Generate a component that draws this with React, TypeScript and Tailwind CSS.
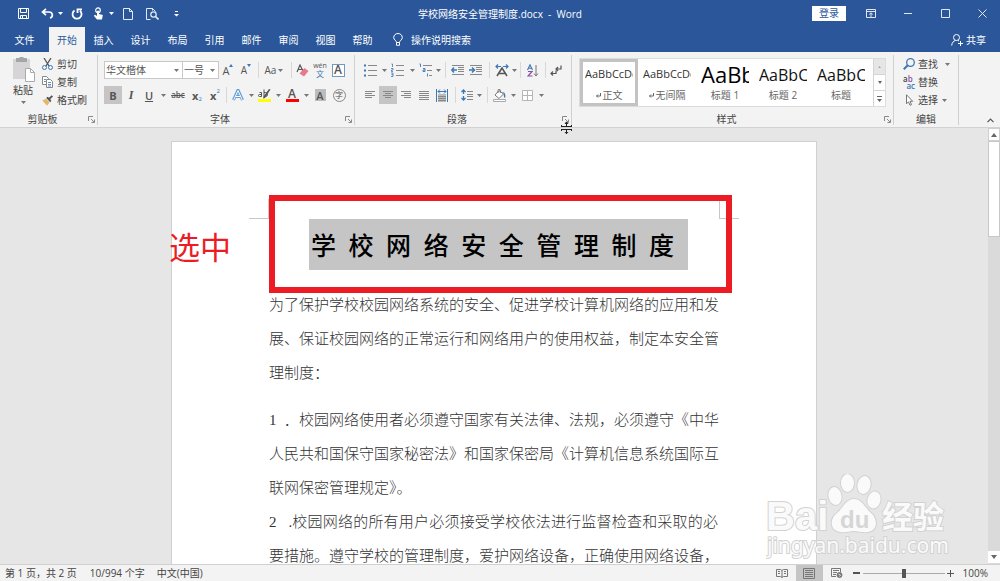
import type { ReactNode } from "react";

const blue = "#3b78b5";
const ink = "#555555";

function Caret({ className = "w-2", light = false }: { className?: string; light?: boolean }) {
  return (
    <span className={`flex shrink-0 items-center justify-center ${className}`}>
      <svg width="5" height="3" viewBox="0 0 5 3">
        <path d="M0 0h5L2.5 3z" fill={light ? "#fff" : "#777"} />
      </svg>
    </span>
  );
}

function Tool({
  label,
  w = "w-[18px]",
  on = false,
  children,
}: {
  label: string;
  w?: string;
  on?: boolean;
  children: ReactNode;
}) {
  return (
    <button
      type="button"
      aria-label={label}
      className={`flex h-[18px] shrink-0 items-center justify-center leading-none ${w} ${on ? "bg-[#c5c5c5]" : ""}`}
    >
      {children}
    </button>
  );
}

function Sep({ w = "w-2" }: { w?: string }) {
  return (
    <span className={`flex h-4 shrink-0 justify-center ${w}`}>
      <span className="w-px bg-[#d8d8d8]" />
    </span>
  );
}

function Launcher() {
  return (
    <button type="button" aria-label="更多选项" className="flex h-3 w-3 items-center justify-center">
      <svg width="7" height="7" viewBox="0 0 7 7" fill="none" stroke="#888">
        <path d="M.5 5V.5H5M3 3l3 3M6.500 3.500v3h-3" />
      </svg>
    </button>
  );
}

function Group({
  title,
  width,
  launcher = true,
  children,
}: {
  title: string;
  width: string;
  launcher?: boolean;
  children: ReactNode;
}) {
  return (
    <section className={`flex shrink-0 flex-col border-r border-[#d0d0d0] ${width}`}>
      <div className="flex-1">{children}</div>
      <div className="flex h-3 items-center">
        <h2 className="flex-1 text-center text-[10px] leading-3 text-[#444]">{title}</h2>
        {launcher && <Launcher />}
      </div>
    </section>
  );
}

function Lines({ rows }: { rows: [number, number][] }) {
  return (
    <svg width="12" height="12" viewBox="0 0 12 12" stroke="#888">
      {rows.map(([a, b], i) => (
        <path key={i} d={`M${a} ${i * 2 + 2.5}H${b}`} />
      ))}
    </svg>
  );
}

function ListIcon({ kind }: { kind: "dot" | "num" | "multi" }) {
  return (
    <svg width="14" height="14" viewBox="0 0 14 14">
      {kind === "dot" && (
        <>
          <path d="M5 2.500h9M5 7.500h9M5 12.500h9" stroke="#888" />
          <path d="M1 1.500h2v2H1zM1 6.500h2v2H1zM1 11.500h2v2H1z" fill={blue} />
        </>
      )}
      {kind === "num" && (
        <>
          <path d="M5 2.500h8M5 7.500h8M5 12.500h8" stroke="#888" />
          <path d="M.5 1h1v3M0 5.500h2v1.500H.5V8.500H2M0 10h2v3.500H0M.5 11.700H2" fill="none" stroke={blue} strokeWidth=".8" />
        </>
      )}
      {kind === "multi" && (
        <>
          <path d="M4 2.500h9M8 7.500h5M10 12.500h3" stroke="#888" />
          <path d="M.5 1h1v3M4 5.500h2v3H4V7h2M8.500 10.500v3" fill="none" stroke={blue} strokeWidth=".9" />
        </>
      )}
    </svg>
  );
}

function IndentIcon({ inward }: { inward: boolean }) {
  return (
    <svg width="14" height="12" viewBox="0 0 14 12" fill="none">
      <path d="M1 1.500h12M7 3.500h6M7 5.500h6M7 7.500h6M1 10.500h12" stroke="#888" />
      <path
        d={inward ? "M0 6h5M3 3.500L5.500 6 3 8.500" : "M6 6H1M3 3.500L.7 6 3 8.500"}
        stroke={blue}
        strokeWidth="1.500"
      />
    </svg>
  );
}

function TitleBar() {
  return (
    <header className="flex h-[27px] shrink-0 items-center justify-between text-white">
      <div className="flex flex-1 items-center">
        <span className="w-[14px]" />
        <Tool label="保存">
          <svg width="11" height="11" viewBox="0 0 11 11" fill="none" stroke="#fff">
            <path d="M.5.5h10v10H.5zM2.500.5v4h6v-4M2.500 10.500v-3h6v3M4.500 8v2" />
          </svg>
        </Tool>
        <span className="w-[6px]" />
        <Tool label="撤消">
          <svg width="13" height="11" viewBox="0 0 13 11" fill="none" stroke="#fff" strokeWidth="1.700">
            <path d="M5 .8L1.500 4 5 7.200M1.500 4H8c4 0 4.500 5 1 6" />
          </svg>
        </Tool>
        <Caret light />
        <Tool label="重复" w="w-[26px]">
          <svg width="12" height="12" viewBox="0 0 12 12" fill="none" stroke="#fff" strokeWidth="1.800">
            <path d="M3.500 2.500A4.500 4.500 0 1 0 9 2.800M6.500 5V1.300H11" />
          </svg>
        </Tool>
        <Tool label="触摸/鼠标模式" w="w-[16px]">
          <svg width="11" height="13" viewBox="0 0 11 13">
            <path d="M4 4.500V9L2 7.800.8 8.800 4 12.500h5l.8-4.500L6 7V4.500a1 1 0 0 0-2 0z" fill="#fff" />
            <circle cx="5" cy="3.200" r="2.300" fill="none" stroke="#fff" strokeWidth="1.200" />
          </svg>
        </Tool>
        <Caret light className="w-[10px]" />
        <Tool label="新建" w="w-6">
          <svg width="10" height="12" viewBox="0 0 10 12" fill="none" stroke="#e6ecf5">
            <path d="M.5.5h6l3 3v8h-9zM6.500.5v3h3" />
          </svg>
        </Tool>
        <Tool label="打印预览" w="w-6">
          <svg width="13" height="12" viewBox="0 0 13 12" fill="none" stroke="#e6ecf5">
            <path d="M4.500 11.500h-4V.5h6l3 3M6.500.5v2" />
            <circle cx="7.500" cy="6.500" r="2.700" strokeWidth="1.200" />
            <path d="M9.500 8.500l3 3" strokeWidth="1.600" />
          </svg>
        </Tool>
        <Tool label="自定义快速访问工具栏" w="w-6">
          <svg width="5" height="6" viewBox="0 0 5 6" fill="#fff">
            <path d="M1 0h3v1H1zM0 3h5L2.500 5.500z" />
          </svg>
        </Tool>
      </div>
      <h1 className="text-center text-[10px] leading-4">学校网络安全管理制度.docx&nbsp; -&nbsp; Word</h1>
      <div className="flex flex-1 items-center justify-end">
        <button type="button" className="h-[15px] w-[34px] bg-white text-[10px] leading-[15px] text-[#2b579a]">
          登录
        </button>
        <Tool label="功能区显示选项" w="w-[50px]">
          <svg width="10" height="9" viewBox="0 0 10 9" fill="none" stroke="#dfe7f3">
            <path d="M.5.5h9v8h-9zM1 2.500h8M5 8V4M3.200 5.500L5 3.800l1.800 1.700" />
          </svg>
        </Tool>
        <Tool label="最小化" w="w-[24px]">
          <svg width="8" height="1" viewBox="0 0 8 1">
            <path d="M0 0h8v1H0z" fill="#dfe7f3" />
          </svg>
        </Tool>
        <Tool label="最大化" w="w-[50px]">
          <svg width="9" height="9" viewBox="0 0 9 9" fill="none" stroke="#dfe7f3">
            <path d="M.5.5h8v8h-8z" />
          </svg>
        </Tool>
        <Tool label="关闭" w="w-[24px]">
          <svg width="9" height="9" viewBox="0 0 9 9" stroke="#dfe7f3">
            <path d="M.5.5l8 8M8.500.5l-8 8" />
          </svg>
        </Tool>
        <span className="w-[6px]" />
      </div>
    </header>
  );
}

const tabs = ["插入", "设计", "布局", "引用", "邮件", "审阅", "视图", "帮助"];

function TabBar() {
  return (
    <nav className="flex h-[25px] shrink-0 items-stretch text-[10px] leading-4 text-white">
      <button type="button" className="w-[49px]">文件</button>
      <button type="button" className="w-[36px] bg-[#f3f3f3] text-[#2b579a]">开始</button>
      {tabs.map((t) => (
        <button key={t} type="button" className="w-[37px]">{t}</button>
      ))}
      <button type="button" className="ml-3 flex items-center gap-2">
        <svg width="10" height="13" viewBox="0 0 10 13" fill="none" stroke="#fff">
          <path d="M3.500 9.500C3.500 7.500.7 7 .7 4.500a4.300 4 0 0 1 8.600 0c0 2.500-2.800 3-2.800 5zM3.500 9.500v2.800h3V9.500" />
        </svg>
        操作说明搜索
      </button>
      <button type="button" className="mr-[14px] ml-auto flex items-center gap-[3px]">
        <svg width="12" height="12" viewBox="0 0 12 12" fill="none" stroke="#fff">
          <circle cx="5.500" cy="3.500" r="3" />
          <path d="M.7 11.500C1 8.500 2.500 7 4.500 6.500M7 6.500l1 .5M9.500 7v5M7 9.500h5" />
        </svg>
        共享
      </button>
    </nav>
  );
}

function Clipboard() {
  return (
    <Group title="剪贴板" width="w-[98px]">
      <div className="flex pl-[10px] text-[10px] text-[#444]">
        <button type="button" className="flex w-[26px] flex-col items-center pt-[2px]">
          <svg width="23" height="25" viewBox="0 0 23 25">
            <path d="M1 2h17v20H1z" fill="#d6d4d6" />
            <path d="M4 1h3.500a2 2 0 0 1 4 0H15v4H4z" fill="#a5a5a5" />
            <path d="M13.500 11.500h5l4 4v9h-9z" fill="#fff" stroke="#aaa" />
            <path d="M18.500 11.500v4h4" fill="none" stroke="#aaa" />
          </svg>
          <span className="leading-4 whitespace-nowrap">粘贴</span>
          <Caret className="h-2" />
        </button>
        <div className="flex flex-col pl-[6px]">
          <button type="button" className="flex h-[18px] items-center gap-1">
            <svg width="11" height="12" viewBox="0 0 11 12" fill="none">
              <path d="M2 0l5 8M9 0L4 8" stroke={ink} strokeWidth="1.300" />
              <circle cx="2.500" cy="9.500" r="2" stroke={blue} />
              <circle cx="8.500" cy="9.500" r="2" stroke={blue} />
            </svg>
            剪切
          </button>
          <button type="button" className="flex h-[18px] items-center gap-1">
            <svg width="11" height="12" viewBox="0 0 11 12" fill="#fff" stroke="#888">
              <path d="M.5.5h4l2 2v6h-6z" />
              <path d="M4.500 3.500h4l2 2v6h-6z" />
              <path d="M2 3.500h2M2 5.500h2M6 6.500h3M6 8.500h3M6 10h3" stroke={blue} strokeWidth=".8" />
            </svg>
            复制
          </button>
          <button type="button" className="flex h-[18px] items-center gap-1">
            <svg width="11" height="11" viewBox="0 0 11 11">
              <path d="M.3 5.500L4 3.800l3.500 3.700L5 10.700z" fill="#e8b567" />
              <path d="M4.200 3l4 4.200 1.200-1.500-1.200-1.500L11 1.500 9.700.2 7 2.800 5.500 1.700z" fill={ink} />
            </svg>
            格式刷
          </button>
        </div>
      </div>
    </Group>
  );
}

function FontGroup() {
  return (
    <Group title="字体" width="w-[257px]">
      <div className="flex flex-col gap-[7px] pt-[6px] pl-[6px] text-[#555]">
        <div className="flex items-center">
          <div className="flex h-[18px] w-[79px] items-center border border-[#c8c8c8] bg-white">
            <select aria-label="字体" className="h-4 min-w-0 flex-1 appearance-none bg-transparent pl-px text-[10px] leading-4 outline-none">
              <option>华文楷体</option>
            </select>
            <Caret className="w-3" />
          </div>
          <div className="-ml-px flex h-[18px] w-[37px] items-center border border-[#c8c8c8] bg-white">
            <select aria-label="字号" className="h-4 min-w-0 flex-1 appearance-none bg-transparent pl-px text-[10px] leading-4 outline-none">
              <option>一号</option>
            </select>
            <Caret className="w-3" />
          </div>
          <Tool label="增大字号">
            <span className="text-[11px]">A</span>
            <svg width="4" height="12" viewBox="0 0 4 12"><path d="M0 3h4L2 0z" fill={blue} /></svg>
          </Tool>
          <Tool label="减小字号">
            <span className="text-[10px]">A</span>
            <svg width="4" height="12" viewBox="0 0 4 12"><path d="M0 0h4L2 3z" fill={blue} /></svg>
          </Tool>
          <Sep w="w-[6px]" />
          <Tool label="更改大小写" w="w-[28px]">
            <span className="text-[10px]">Aa</span>
            <Caret className="w-[9px]" />
          </Tool>
          <Sep w="w-1" />
          <Tool label="清除所有格式">
            <svg width="13" height="13" viewBox="0 0 13 13">
              <path d="M1 8L4 1l3 6M2 5.500h4" fill="none" stroke={ink} strokeWidth="1.200" />
              <path d="M8.500 4l4 3-4.500 5.500-4.500-3z" fill="#e8798c" />
            </svg>
          </Tool>
          <Tool label="拼音指南">
            <span className="flex flex-col items-center">
              <span className="text-[7px] leading-[6px]">wén</span>
              <span className="text-[8px] leading-[9px] text-[#3b78b5]">文</span>
            </span>
          </Tool>
          <Tool label="字符边框">
            <span className="flex h-[13px] w-[13px] items-center justify-center border border-[#6f9bc0] bg-white text-[12px] font-semibold">A</span>
          </Tool>
        </div>
        <div className="flex items-center">
          <Tool label="加粗" on><b className="text-[11px]">B</b></Tool>
          <Tool label="倾斜"><i className="font-['Liberation_Serif',serif] text-[12px] font-bold">I</i></Tool>
          <Tool label="下划线"><span className="text-[11px] font-semibold underline">U</span></Tool>
          <Caret className="w-[10px]" />
          <Tool label="删除线" w="w-5"><span className="text-[8px] font-semibold line-through">abc</span></Tool>
          <Tool label="下标">
            <b className="text-[11px]">x</b><span className="self-end pb-[2px] text-[6px] text-[#3b78b5]">2</span>
          </Tool>
          <Tool label="上标">
            <b className="text-[11px]">x</b><span className="self-start pt-[2px] text-[6px] text-[#3b78b5]">2</span>
          </Tool>
          <Sep w="w-1" />
          <Tool label="文本效果" w="w-5">
            <svg width="12" height="12" viewBox="0 0 12 12" fill="none">
              <path d="M1.500 11L6 1l4.500 10M3.500 7.500h5" stroke="#5e9bd5" strokeWidth="3" strokeLinejoin="round" />
              <path d="M1.800 10.800L6 1.500l4.200 9.300M3.500 7.500h5" stroke="#fff" strokeWidth="1" />
            </svg>
          </Tool>
          <Caret className="w-[6px]" />
          <Tool label="突出显示颜色" w="w-5">
            <span className="flex flex-col items-center">
              <svg width="14" height="10" viewBox="0 0 14 10">
                <path d="M2.500 3.500h2v4h-2a1 1 0 0 1 0-2h2M7 .5v7h1.500a1.500 1.500 0 0 0 0-4H7" fill="none" stroke={ink} />
                <path d="M13.500.5L8 9l-2 .5.5-2L12 0z" fill={ink} />
              </svg>
              <span className="h-[3px] w-[13px] bg-[#ffff00]" />
            </span>
          </Tool>
          <Caret />
          <Tool label="字体颜色" w="w-5">
            <span className="flex flex-col items-center">
              <span className="text-[12px] leading-[10px] font-semibold">A</span>
              <span className="h-[3px] w-[13px] bg-[#ff0000]" />
            </span>
          </Tool>
          <Caret />
          <Tool label="字符底纹" w="w-5">
            <span className="flex h-[12px] w-[11px] items-center justify-center bg-[#bdbdbd] text-[11px] font-semibold">A</span>
          </Tool>
          <Tool label="带圈字符">
            <span className="flex h-[13px] w-[13px] items-center justify-center rounded-full border border-[#888] text-[8px]">字</span>
          </Tool>
        </div>
      </div>
    </Group>
  );
}

function ParagraphGroup() {
  return (
    <Group title="段落" width="w-[217px]">
      <div className="flex flex-col gap-[7px] pt-[6px] pl-[6px]">
        <div className="flex items-center">
          <Tool label="项目符号"><ListIcon kind="dot" /></Tool>
          <Caret className="w-[10px]" />
          <Tool label="编号"><ListIcon kind="num" /></Tool>
          <Caret className="w-[10px]" />
          <Tool label="多级列表"><ListIcon kind="multi" /></Tool>
          <Caret className="w-[6px]" />
          <Sep />
          <Tool label="减少缩进量"><IndentIcon inward={false} /></Tool>
          <Tool label="增加缩进量"><IndentIcon inward /></Tool>
          <Sep />
          <Tool label="中文版式">
            <svg width="14" height="13" viewBox="0 0 14 13" fill="none">
              <path d="M2 12l5-8 5 8M4 9.500h6" stroke={ink} strokeWidth="1.500" />
              <path d="M6 2.500H1M3 .5l-2 2 2 2M8 2.500h5M11 .5l2 2-2 2" stroke={blue} strokeWidth="1.200" />
            </svg>
          </Tool>
          <Caret className="w-[6px]" />
          <Sep w="w-[6px]" />
          <Tool label="排序" w="w-5">
            <svg width="12" height="13" viewBox="0 0 12 13" fill="none">
              <path d="M.5 6L3 .8 5.500 6M1.500 4.200h3" stroke={blue} strokeWidth="1.100" />
              <path d="M1 7.500h4L1 12h4.500" stroke="#8a4fa8" strokeWidth="1.200" />
              <path d="M9 1v11M7 9.500L9 12l2-2.500" stroke="#777" />
            </svg>
          </Tool>
          <Sep w="w-1" />
          <Tool label="显示编辑标记">
            <svg width="12" height="11" viewBox="0 0 12 11" fill="none" stroke={ink} strokeWidth="1.200">
              <path d="M11 .5V4H6M8 2L6 4l2 2M6 5.500V8.500H1M3 6.500l-2 2 2 2" />
            </svg>
          </Tool>
        </div>
        <div className="flex items-center">
          <Tool label="左对齐"><Lines rows={[[1, 11], [1, 8], [1, 11], [1, 8]]} /></Tool>
          <Tool label="居中" on><Lines rows={[[1, 11], [3, 9], [1, 11], [3, 9]]} /></Tool>
          <Tool label="右对齐"><Lines rows={[[1, 11], [4, 11], [1, 11], [4, 11]]} /></Tool>
          <Tool label="两端对齐"><Lines rows={[[1, 11], [1, 11], [1, 11], [1, 11], [1, 11]]} /></Tool>
          <Tool label="分散对齐">
            <svg width="12" height="13" viewBox="0 0 12 13" fill="none">
              <path d="M2 5h8v8H2z" fill="#bbb" />
              <path d="M2 7.500h8M2 9.500h8M2 11.500h8" stroke="#888" />
              <path d="M.5 0v13M11.500 0v13M2 2.500h8M4 .5l-2 2 2 2M8 .5l2 2-2 2" stroke={blue} />
            </svg>
          </Tool>
          <Sep />
          <Tool label="行距" w="w-4">
            <svg width="12" height="12" viewBox="0 0 12 12" fill="none">
              <path d="M6 2.500h6M6 5.500h6M6 7.500h6M6 10.500h6" stroke="#888" />
              <path d="M2.500 1v4M2.500 7v4M.5 3l2-2 2 2M.5 9l2 2 2-2" stroke={blue} strokeWidth="1.300" />
            </svg>
          </Tool>
          <Caret />
          <Sep />
          <Tool label="底纹">
            <svg width="14" height="13" viewBox="0 0 14 13" fill="none">
              <path d="M6 1.500L2 6l4 3.500L10.500 5zM5 4V1.500a1.200 1.200 0 0 1 2.400 0V4" fill="#fff" stroke="#777" />
              <path d="M9 3c3 0 4 3 3 6-1-.5-1.500-2-1-4z" fill={blue} />
              <path d="M.5 10.500h12v2H.5z" fill="#fff" stroke="#aaa" />
            </svg>
          </Tool>
          <Caret />
          <Tool label="边框" w="w-5">
            <svg width="11" height="11" viewBox="0 0 11 11" fill="#fff" stroke="#b5b5b5">
              <path d="M.5.5h10v10H.5zM5.500.5v10M.5 5.500h10" />
            </svg>
          </Tool>
          <Caret />
        </div>
      </div>
    </Group>
  );
}

const styles = [
  { name: "正文", mark: true, sample: "AaBbCcDc", size: "text-[11px] text-[#333]", on: true },
  { name: "无间隔", mark: true, sample: "AaBbCcDc", size: "text-[11px] text-[#333]", on: false },
  { name: "标题 1", mark: false, sample: "AaBb", size: "text-[22px] font-medium text-black", on: false },
  { name: "标题 2", mark: false, sample: "AaBbC", size: "text-[16px] text-[#111]", on: false },
  { name: "标题", mark: false, sample: "AaBbC", size: "text-[16px] text-[#111]", on: false },
];

function StylesGroup() {
  return (
    <Group title="样式" width="w-[322px]">
      <div className="pt-[3px] pl-[7px]">
        <div className="flex h-[49px] w-[307px] border border-[#dcdcdc] bg-white">
          {styles.map((s) => (
            <button
              key={s.name}
              type="button"
              className={`flex w-[58px] shrink-0 flex-col items-stretch border-[3px] px-[2px] ${s.on ? "border-[#c3c3c3]" : "border-transparent"}`}
            >
              <span className={`flex h-[26px] items-center overflow-hidden whitespace-nowrap ${s.size}`}>{s.sample}</span>
              <span className="flex h-4 items-center justify-center gap-[2px] text-[10px] leading-none whitespace-nowrap text-[#666]">
                {s.mark && (
                  <svg width="5" height="5" viewBox="0 0 5 5" fill="none" stroke="#666">
                    <path d="M4.500 0v3H.5M2 1.500L.5 3 2 4.500" />
                  </svg>
                )}
                {s.name}
              </span>
            </button>
          ))}
          <div className="ml-auto flex w-3 flex-col border-l border-[#d4d4d4]">
            <button type="button" aria-label="上一行" className="flex flex-1 items-center justify-center bg-[#e6e6e6]">
              <svg width="3" height="2" viewBox="0 0 3 2"><path d="M0 2h3L1.500 0z" fill="#aaa" /></svg>
            </button>
            <button type="button" aria-label="下一行" className="flex flex-1 items-center justify-center border-y border-[#d4d4d4]">
              <svg width="4" height="3" viewBox="0 0 4 3"><path d="M0 0h4L2 3z" fill="#666" /></svg>
            </button>
            <button type="button" aria-label="其他样式" className="flex flex-1 items-center justify-center">
              <svg width="5" height="6" viewBox="0 0 5 6" fill="#666"><path d="M0 0h5v1H0zM0 3h5L2.500 6z" /></svg>
            </button>
          </div>
        </div>
      </div>
    </Group>
  );
}

function EditGroup() {
  return (
    <Group title="编辑" width="w-[65px]" launcher={false}>
      <div className="flex flex-col pl-[9px] text-[10px] text-[#444]">
        <button type="button" className="flex h-[18px] items-center gap-[3px]">
          <svg width="12" height="12" viewBox="0 0 12 12" fill="none" stroke={blue}>
            <circle cx="7.500" cy="4.500" r="3.800" strokeWidth="1.300" />
            <path d="M4.800 7.200L.8 11.200" strokeWidth="2" />
          </svg>
          查找
          <Caret className="w-[12px]" />
        </button>
        <button type="button" className="flex h-[18px] items-center gap-[3px]">
          <span className="flex w-3 flex-col text-[8px] leading-[7px] font-semibold">
            <span className="text-left">a<span className="text-[#8a4fa8]">b</span></span>
            <span className="text-right text-[#3b78b5]">ac</span>
          </span>
          替换
        </button>
        <button type="button" className="flex h-[18px] items-center gap-[3px]">
          <svg width="12" height="12" viewBox="0 0 12 12" fill="#fff" stroke="#777">
            <path d="M3.500.8v9l2-2 1.500 3.500 1.500-.7L7 7.300h2.700z" />
          </svg>
          选择
          <Caret className="w-[6px]" />
        </button>
      </div>
    </Group>
  );
}

function CropMark({ side }: { side: "left" | "right" }) {
  return (
    <span
      className={`absolute top-[57px] h-[20px] w-[20px] border-b border-[#c8c8c8] ${side === "left" ? "left-[77px] border-r" : "left-[547px] border-l"}`}
    />
  );
}

const paragraphs = [
  {
    lines: ["为了保护学校校园网络系统的安全、促进学校计算机网络的应用和发", "展、保证校园网络的正常运行和网络用户的使用权益，制定本安全管"],
    last: "理制度：",
  },
  {
    lines: ["1\u00a0 ．校园网络使用者必须遵守国家有关法律、法规，必须遵守《中华", "人民共和国保守国家秘密法》和国家保密局《计算机信息系统国际互"],
    last: "联网保密管理规定》。",
  },
  {
    lines: ["2\u00a0\u00a0 .校园网络的所有用户必须接受学校依法进行监督检查和采取的必", "要措施。遵守学校的管理制度，爱护网络设备，正确使用网络设备，"],
    last: "",
  },
];

function Watermark() {
  return (
    <svg
      width="184"
      height="90"
      viewBox="0 0 184 90"
      className="pointer-events-none absolute right-[38px] bottom-0"
      fill="#fafafa"
      stroke="#d2d2d2"
      strokeWidth="2"
      paintOrder="stroke"
    >
      <text x="0" y="56" fontSize="40" fontWeight="700" fontFamily="Liberation Sans, sans-serif">Bai</text>
      <ellipse cx="69" cy="22" rx="6.500" ry="9" transform="rotate(-12 69 22)" />
      <ellipse cx="81.500" cy="9" rx="6.500" ry="9" />
      <ellipse cx="98" cy="11" rx="6.500" ry="9" transform="rotate(12 98 11)" />
      <ellipse cx="108" cy="26" rx="6.500" ry="8.500" transform="rotate(14 108 26)" />
      <path d="M88 25c8 0 11 9 17 14 6 5 8 17-3 19-6 1-9-1-14-1s-8 2-14 1c-11-2-10-14-3-19 6-5 9-14 17-14z" />
      <text x="74" y="54" fontSize="24" fontWeight="700" fontFamily="Liberation Sans, sans-serif" fill="#d6d6d6" stroke="none">du</text>
      <text x="116" y="54" fontSize="31" fontWeight="700" fontFamily="Noto Sans CJK SC, sans-serif">经验</text>
      <text x="1" y="79" fontSize="21" fontFamily="Noto Sans, sans-serif">jingyan.baidu.com</text>
    </svg>
  );
}

function DocumentArea() {
  return (
    <main className="flex min-h-0 flex-1 bg-[#e6e6e6]">
      <div className="relative flex min-w-0 flex-1 justify-center overflow-hidden pt-[13px]">
        <article className="relative h-[900px] w-[646px] shrink-0 border border-[#d0d0d0] bg-white pr-[98px] pl-[97px] pt-[77px] text-[#333]">
          <CropMark side="left" />
          <CropMark side="right" />
          <div className="mr-[30px] ml-[40px] h-[51px] bg-[#c5c5c5] pr-[14px] pl-[2px]">
            <h2 className="font-['Noto_Sans_CJK_SC',sans-serif] text-[25px] leading-[50px] font-medium text-black [text-align-last:justify]">
              学校网络安全管理制度
            </h2>
          </div>
          <div className="mt-[18px] flex flex-col font-['Liberation_Serif','Noto_Sans_CJK_SC',serif] text-[15px] leading-[34px] font-light">
            {paragraphs.map((p, i) => (
              <p key={i} className={i === 0 ? "mb-[13px]" : ""}>
                {p.lines.map((l) => (
                  <span key={l} className="block whitespace-nowrap [text-align-last:justify]">{l}</span>
                ))}
                {p.last}
              </p>
            ))}
          </div>
          <div className="absolute top-[53px] left-[97px] h-[98px] w-[463px] border-[6px] border-[#ed1c24]" />
          <div className="absolute top-[81px] -left-[3px] font-['Noto_Sans_CJK_SC',sans-serif] text-[31px] leading-[46px] text-[#ed1c24]">选中</div>
        </article>
        <Watermark />
      </div>
      <div className="flex w-3 shrink-0 flex-col bg-[#dadada]">
        <button type="button" aria-label="向上滚动" className="flex h-[13px] items-center justify-center border border-[#cfcfcf] bg-white">
          <svg width="6" height="4" viewBox="0 0 6 4"><path d="M0 4h6L3 0z" fill="#666" /></svg>
        </button>
        <div className="h-[96px] border border-[#c8c8c8] bg-white" />
        <button type="button" aria-label="向下滚动" className="mt-auto mb-px flex h-3 items-center justify-center bg-white">
          <svg width="6" height="4" viewBox="0 0 6 4"><path d="M0 0h6L3 4z" fill="#666" /></svg>
        </button>
      </div>
    </main>
  );
}

function StatusBar() {
  return (
    <footer className="flex h-[17px] shrink-0 items-center border-t border-[#d0d0d0] bg-[#f3f3f3] pl-[5px] text-[10px] leading-4 text-[#444]">
      <span>第 1 页，共 2 页</span>
      <span className="ml-[13px]">10/994 个字</span>
      <span className="ml-3">中文(中国)</span>
      <div className="ml-auto flex items-center pr-3">
        <Tool label="阅读视图" w="w-7">
          <svg width="12" height="9" viewBox="0 0 12 9" fill="none" stroke="#777">
            <path d="M6 1.500L4.500.5h-4v7h4L6 8.500l1.500-1h4v-7h-4zM6 1.500v7M2 2.500h2M2 4.500h2M8 2.500h2M8 4.500h2" />
          </svg>
        </Tool>
        <button type="button" aria-label="页面视图" className="flex h-4 w-[27px] items-center justify-center bg-[#c5c5c5]">
          <svg width="12" height="11" viewBox="0 0 12 11" fill="none" stroke="#777">
            <path d="M.5.5h11v10H.5zM2 2.500h8M2 4.500h8M2 6.500h8M2 8.500h8" />
          </svg>
        </button>
        <Tool label="Web 版式视图" w="w-7">
          <svg width="12" height="10" viewBox="0 0 12 10" fill="none" stroke="#777">
            <path d="M5 8.500H.5v-8h9V4M2 2.500h6M2 4.500h4M2 6.500h3" />
            <circle cx="8.500" cy="7" r="2.500" fill="#777" />
            <path d="M7.500 6l2 1-1 1.500" stroke="#f3f3f3" strokeWidth=".8" />
          </svg>
        </Tool>
        <button type="button" aria-label="缩小" className="flex h-4 w-3 items-center justify-center">
          <svg width="7" height="2" viewBox="0 0 7 2"><path d="M0 0h7v2H0z" fill="#555" /></svg>
        </button>
        <input
          type="range"
          aria-label="显示比例"
          defaultValue={50}
          className="h-4 w-[82px] appearance-none bg-transparent [&::-webkit-slider-runnable-track]:h-px [&::-webkit-slider-runnable-track]:bg-[#aaa] [&::-webkit-slider-thumb]:-mt-1 [&::-webkit-slider-thumb]:h-[9px] [&::-webkit-slider-thumb]:w-[4px] [&::-webkit-slider-thumb]:appearance-none [&::-webkit-slider-thumb]:bg-[#555]"
        />
        <button type="button" aria-label="放大" className="flex h-4 w-3 items-center justify-center">
          <svg width="7" height="7" viewBox="0 0 7 7"><path d="M0 3h3V0h1v3h3v1H4v3H3V4H0z" fill="#555" /></svg>
        </button>
        <span className="ml-[6px]">100%</span>
      </div>
    </footer>
  );
}

export default function App() {
  return (
    <div className="relative flex h-screen flex-col overflow-hidden bg-[#2b579a] font-['Open_Sans','Noto_Sans_CJK_SC',sans-serif]">
      <TitleBar />
      <TabBar />
      <div className="flex h-[76px] shrink-0 border-b border-[#d2d2d2] bg-[#f3f3f3] pt-[3px] pb-[2px]">
        <Clipboard />
        <FontGroup />
        <ParagraphGroup />
        <StylesGroup />
        <EditGroup />
        <button type="button" aria-label="折叠功能区" className="mr-[6px] mb-[2px] ml-auto self-end">
          <svg width="7" height="5" viewBox="0 0 7 5" fill="none" stroke="#555" strokeWidth="1.200">
            <path d="M.5 4.200l3-3 3 3" />
          </svg>
        </button>
      </div>
      <DocumentArea />
      <StatusBar />
      <svg width="11" height="13" viewBox="0 0 11 13" className="pointer-events-none absolute top-[121px] left-[561px]">
        <path d="M0 5.500h11M0 8.500h11M5.500 1v4M5.500 9v4" stroke="#222" />
        <path d="M3.500 3h4l-2-2.500zM3.500 11h4l-2 2z" fill="#222" />
        <path d="M.5 4v2M10.500 4v2M.5 8v2M10.500 8v2" stroke="#222" />
      </svg>
    </div>
  );
}
